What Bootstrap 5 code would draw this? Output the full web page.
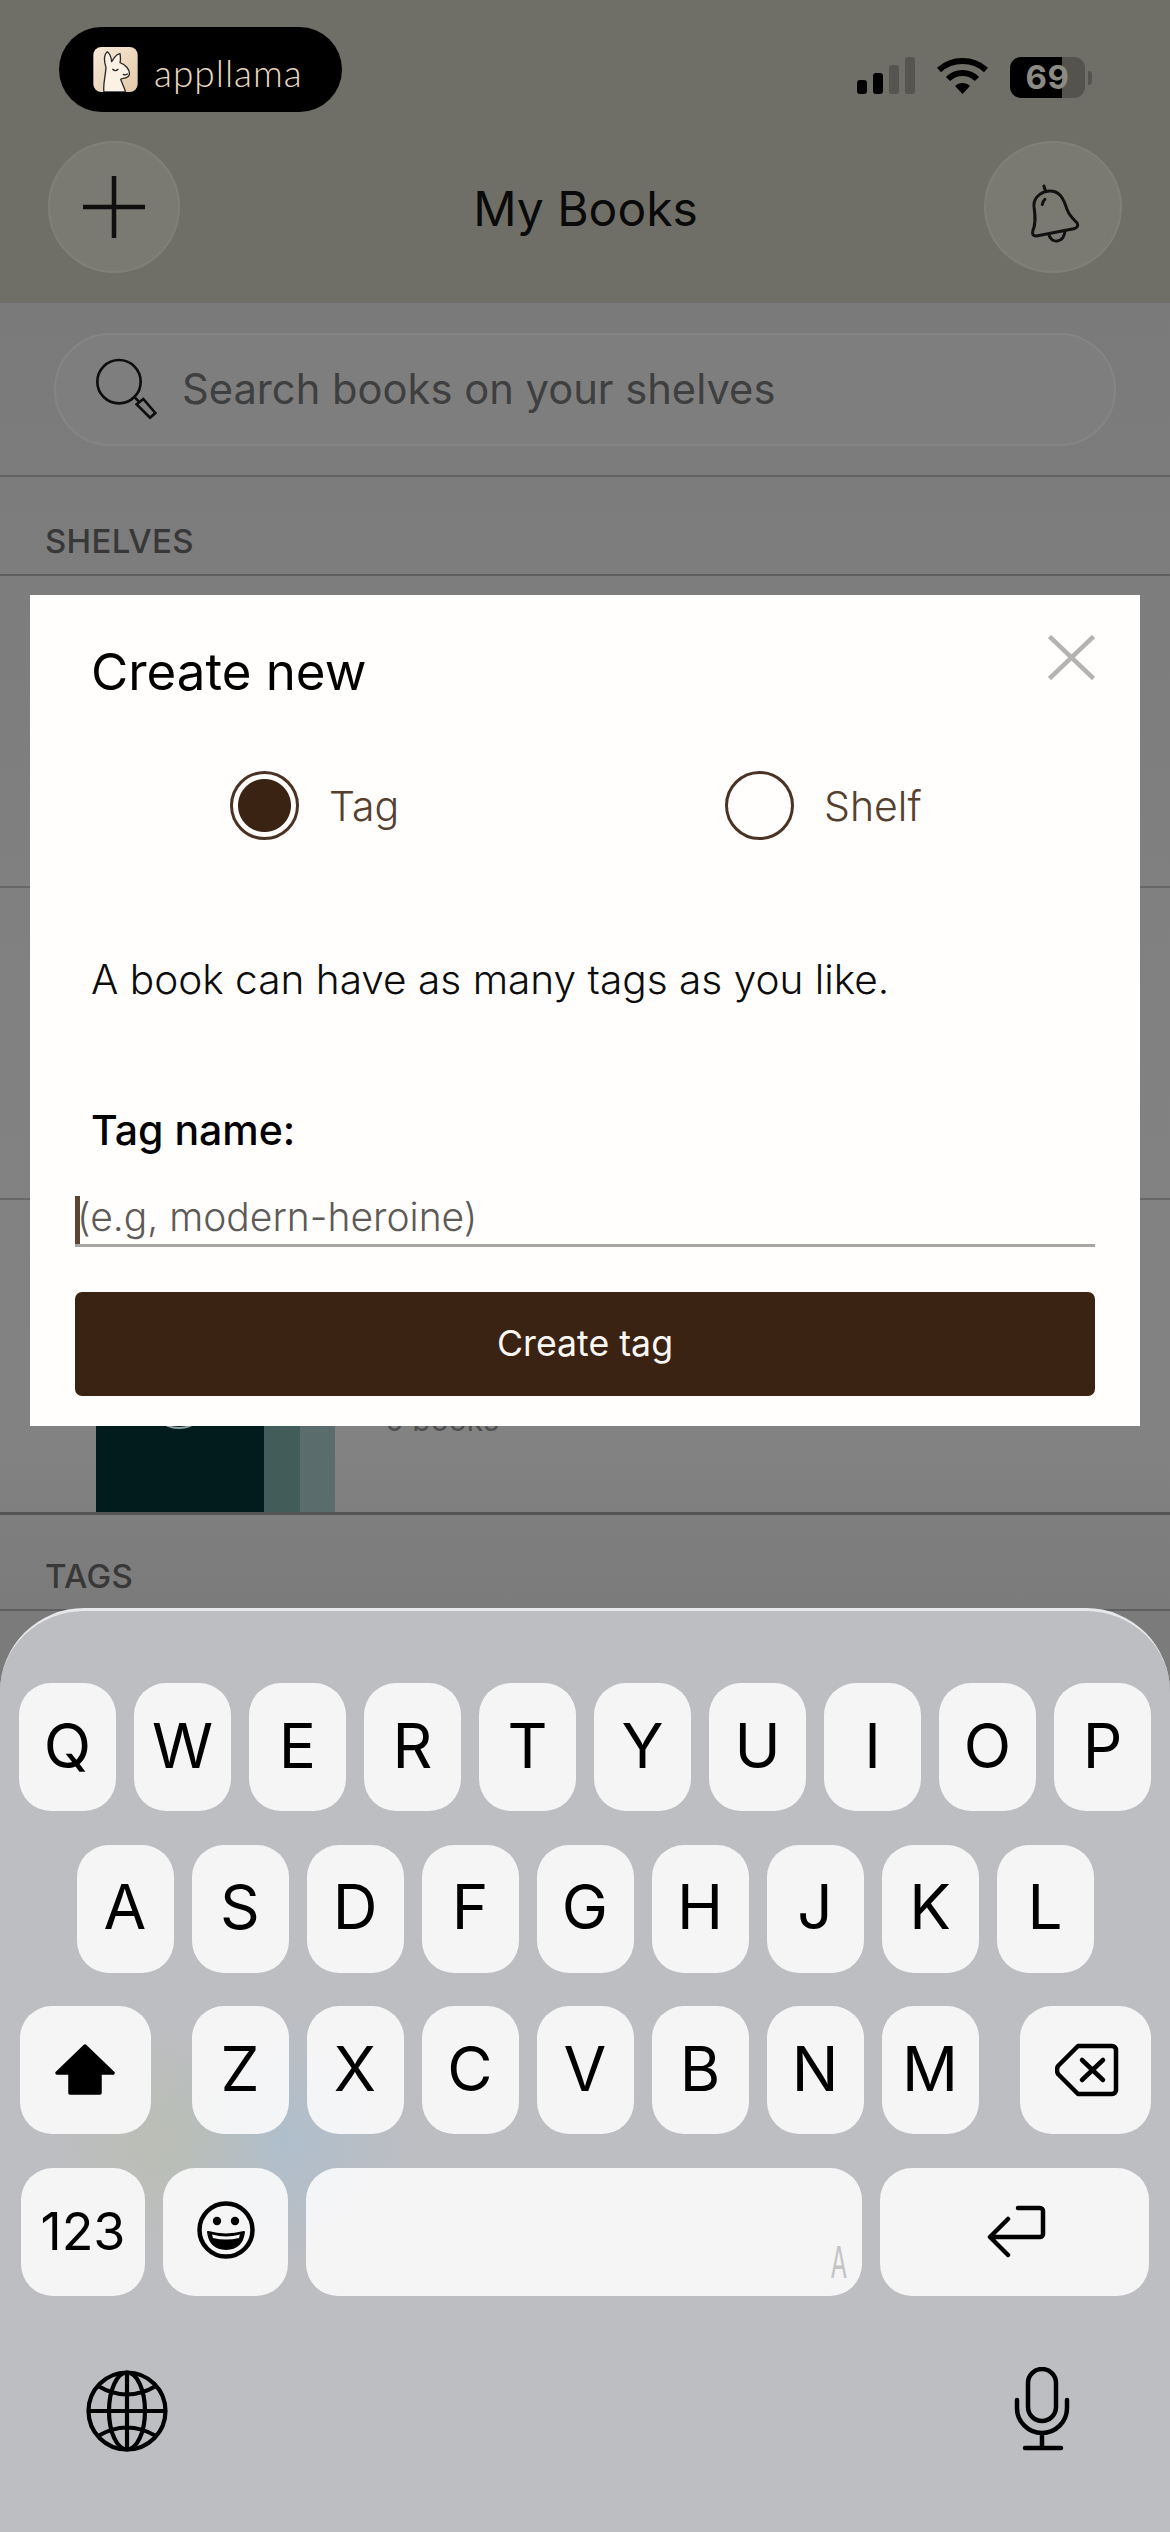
<!doctype html>
<html lang="en">
<head>
<meta charset="utf-8">
<title>My Books</title>
<link href="https://cdn.jsdelivr.net/npm/bootstrap@5.3.0/dist/css/bootstrap.min.css" rel="stylesheet">
<script src="https://cdn.jsdelivr.net/npm/bootstrap@5.3.0/dist/js/bootstrap.bundle.min.js"></script>
<style>
html,body{margin:0;width:1170px;height:2532px;overflow:hidden;background:#7c7c7c}
body{font-family:Inter,"Liberation Sans",sans-serif;color:#000}
.ap-phone{width:1170px;height:2532px;background:linear-gradient(180deg,#7a7a7a 300px,#818181 1000px,#828282 1450px,#7b7b7b 1600px)}
.ap-head{height:303px;background:#6f6f67;padding-top:27px}
.ap-pill{width:283px;height:85px;margin-left:59px;background:#000;border-radius:43px;padding-left:34px;gap:16px}
.ap-logo{width:45px;height:45px;display:block}
.ap-word{font-family:Lato,sans-serif;font-weight:300;font-size:37px;letter-spacing:1px;color:#ead8c3;line-height:1;padding-top:6px}
.ap-status{padding-top:30px;padding-right:78px;gap:22px}
.ap-batt{width:75px;height:41px;border-radius:11px;background:linear-gradient(90deg,#000 69%,#54534d 69%);color:#8b8b83;font-weight:700;font-size:33px;line-height:41px;text-align:center;letter-spacing:.5px}
.ap-nub{width:4px;height:14px;background:#54534d;border-radius:0 4px 4px 0;margin-left:3px}
.ap-nav{margin-top:29px;padding:0 48px}
.ap-round{height:132px;border-radius:50%;background:#7a7a73;border:2px solid #808079;padding:0}
.ap-plus{width:132px}
.ap-bell{width:138px}
.ap-bellicon{margin:14px 0 0 4px}
.ap-title{font-size:48px;line-height:60px;font-weight:400;color:#0a0a0a;margin:3px 0 0 7px}
.ap-searchwrap{height:174px;padding:30px 54px 0;border-bottom:2px solid #626262}
.ap-search{height:113px;border-radius:57px;background:#7e7e7e;border:2px solid #858585;padding-left:38px;gap:23px}
.ap-search span{font-size:41.7px;color:#3f3f3f}
.ap-section{height:99px;border-bottom:2px solid #5f5f5f;padding:0 0 16px 45px;display:flex;align-items:flex-end;font-size:33px;font-weight:500;color:#383838;line-height:1;letter-spacing:.3px}
.ap-section.ap-tags{height:96px}
.ap-shelf{height:312px;border-bottom:2px solid #676767}
.ap-shelf-last{height:315px;border-bottom:3px solid #555;padding-left:96px;align-items:flex-end;gap:50px;display:flex}
.ap-cover{width:239px;height:286px;padding:143px 0 0 53px;background:linear-gradient(90deg,#021b1c 168px,#425c5a 168px,#425c5a 204px,#5b6c6c 204px)}
.ap-ring{width:60px;height:60px;border-radius:50%;border:2px solid #93a3a3}
.ap-count{align-self:flex-start;font-size:30px;line-height:36px;color:#4e4e4e;margin-top:202px}
.ap-modal{position:absolute;left:30px;top:595px;width:1110px;height:831px;background:#fffefc;border:0;border-radius:0}
.ap-mtop{padding:40px 45px 0 61px}
.ap-mtitle{font-size:51px;line-height:60px;font-weight:400;margin:7px 0 0}
.ap-x{display:block}
.ap-radios{margin-top:69px;padding-left:200px}
.ap-ropt{width:495px;flex:none;gap:30px}
.ap-radio.form-check-input{width:69px;height:69px;margin:0;flex:none;border:3px solid #4a3325;background:#fffefc;box-shadow:none}
.ap-radio.form-check-input:checked{background:radial-gradient(circle,#3a2312 0 26px,#fffefc 27px)}
.ap-rlabel{font-size:41px;font-weight:300;color:#55402f;line-height:60px}
.ap-para{margin:115px 0 0 61px;font-size:40.6px;line-height:50px;font-weight:300;color:#0c0c0c}
.ap-lab{display:block;margin:100px 0 0 61px;font-size:41px;line-height:50px;font-weight:500;color:#000}
.ap-input.form-control{margin:41px 45px 0;width:1020px;height:51px;padding:0 0 5px 2px;border:0;border-bottom:3px solid #a9a7a4;border-radius:0;font-size:39px;background:linear-gradient(#5b4535,#5b4535) left top/5px 100% no-repeat;box-shadow:none}
.ap-input.form-control::placeholder{color:#5d5a57;opacity:1;font-weight:300}
.ap-cta.btn{display:block;margin:45px 45px 0;width:1020px;height:104px;background:#3a2312;border:0;border-radius:7px;color:#fbf7f2;font-size:35.7px;font-weight:400;padding:0}
.ap-kb{position:absolute;left:0;right:0;top:1608px;height:924px;border-top:3px solid #e6e8ea;border-radius:84px 84px 0 0;padding-top:72px;
 background:radial-gradient(circle 120px at 165px 530px,rgba(185,190,170,.55),transparent),radial-gradient(circle 130px at 280px 530px,rgba(165,190,210,.6),transparent),#bdbec2}
.ap-row{height:128px;justify-content:center;gap:18px;margin-bottom:33.6px}
.ap-key{width:97px;height:128px;background:rgba(255,255,255,.85);border-radius:32px;display:flex;align-items:center;justify-content:center;font-size:62px;line-height:1;color:#000;font-weight:400;padding-bottom:3px}
.ap-w131{width:131px}
.ap-gapl{margin-left:23px}
.ap-gapr{margin-right:23px}
.ap-w124{width:124px;font-size:52px;padding-bottom:0}
.ap-w125{width:125px}
.ap-w556{width:556px;justify-content:flex-end;align-items:flex-end;padding:0 16px 12px 0}
.ap-w269{width:269px}
.ap-tiny{font-size:44px;line-height:1;color:#c4c4c4;font-weight:400;transform:scaleX(.55);display:block;width:20px;text-align:center}
.ap-shifted{margin:3px 0 0 4px}
.ap-bottom{padding:38px 98px 0 83px}
svg{display:block}
</style>
</head>
<body>
<div class="ap-phone position-relative overflow-hidden">
  <header class="ap-head">
    <div class="d-flex justify-content-between align-items-start">
      <div class="ap-pill d-flex align-items-center">
        <svg class="ap-logo" viewBox="190 108 133 135" aria-hidden="true">
          <defs><linearGradient id="lg" x1="0" y1="0" x2="1" y2="1"><stop offset="0" stop-color="#f7ead9"/><stop offset="1" stop-color="#e3c9a8"/></linearGradient></defs>
          <rect x="190" y="108" width="133" height="135" rx="24" fill="url(#lg)"/>
          <path d="M222 243C218 225 225 205 228 170C222 150 222 130 232 122C242 130 244 142 245 152C250 145 258 128 270 128C272 140 272 148 270 155C285 160 300 175 298 190C295 205 275 200 272 205C278 220 282 230 287 243Z" fill="#fbf1e4" stroke="#2a2a2a" stroke-width="4" stroke-linejoin="round"/>
          <path d="M248 175q8 8 16 0M280 190q6 4 12 -1" fill="none" stroke="#2a2a2a" stroke-width="4" stroke-linecap="round"/>
        </svg>
        <span class="ap-word">appllama</span>
      </div>
      <div class="ap-status d-flex align-items-start">
        <svg width="58" height="37" viewBox="0 0 58 37" aria-hidden="true">
          <rect x="0" y="23" width="10" height="14" rx="3" fill="#000"/>
          <rect x="16" y="16" width="10" height="21" rx="3" fill="#000"/>
          <rect x="32" y="8" width="10" height="29" rx="3" fill="#56554f"/>
          <rect x="48" y="0" width="10" height="37" rx="3" fill="#56554f"/>
        </svg>
        <svg width="51" height="37" viewBox="0 0 51 37" aria-hidden="true">
          <path d="M2 13C15 1 36 1 49 13" fill="none" stroke="#000" stroke-width="6"/>
          <path d="M11 22C19 14 32 14 40 22" fill="none" stroke="#000" stroke-width="6"/>
          <path d="M25.5 37L18 29C22 25 29 25 33 29Z" fill="#000"/>
        </svg>
        <div class="d-flex align-items-center">
          <div class="ap-batt">69</div><div class="ap-nub"></div>
        </div>
      </div>
    </div>
    <div class="ap-nav d-flex justify-content-between align-items-center">
      <button type="button" class="btn ap-round ap-plus d-flex align-items-center justify-content-center" aria-label="Add">
        <svg width="62" height="62" viewBox="0 0 62 62"><path d="M0 31H62M31 0V62" stroke="#0f0f0f" stroke-width="4.5"/></svg>
      </button>
      <h1 class="ap-title">My Books</h1>
      <button type="button" class="btn ap-round ap-bell d-flex align-items-center justify-content-center" aria-label="Notifications">
        <svg class="ap-bellicon" width="53" height="63" viewBox="600 425 160 190">
          <path d="M622 585Q607 585 612 568C622 545 618 520 615 495C613 465 645 445 672 450C700 455 708 485 715 505C722 525 735 535 745 545Q752 558 735 563Z" fill="none" stroke="#111" stroke-width="9" stroke-linejoin="round"/>
          <path d="M660 580C665 608 705 610 709 568M645 434L650 450M640 490Q642 480 648 474" fill="none" stroke="#111" stroke-width="9" stroke-linecap="round"/>
        </svg>
      </button>
    </div>
  </header>

  <div class="ap-searchwrap">
    <div class="ap-search d-flex align-items-center">
      <svg width="65" height="65" viewBox="160 110 195 195" aria-hidden="true">
        <circle cx="235" cy="184" r="65" fill="none" stroke="#0d0d0d" stroke-width="8"/>
        <path d="M283 232L297 246" stroke="#0d0d0d" stroke-width="8"/>
        <path d="M288 252L308 236L344 278L328 292Z" fill="none" stroke="#0d0d0d" stroke-width="8"/>
      </svg>
      <span>Search books on your shelves</span>
    </div>
  </div>

  <div class="ap-section">SHELVES</div>
  <div class="ap-shelf"></div>
  <div class="ap-shelf"></div>
  <div class="ap-shelf-last">
    <div class="ap-cover"><div class="ap-ring"></div></div>
    <div class="ap-count">0 books</div>
  </div>
  <div class="ap-section ap-tags">TAGS</div>

  <div class="card ap-modal">
    <div class="ap-mtop d-flex justify-content-between align-items-start">
      <h2 class="ap-mtitle">Create new</h2>
      <svg class="ap-x" width="47" height="45" viewBox="0 0 47 45" aria-label="Close"><path d="M1.5 1.5L45.5 43.5M45.5 1.5L1.5 43.5" stroke="#b4b3b1" stroke-width="4.5"/></svg>
    </div>
    <div class="ap-radios d-flex">
      <label class="ap-ropt d-flex align-items-center">
        <input class="form-check-input ap-radio" type="radio" name="kind" checked>
        <span class="ap-rlabel">Tag</span>
      </label>
      <label class="ap-ropt d-flex align-items-center">
        <input class="form-check-input ap-radio" type="radio" name="kind">
        <span class="ap-rlabel">Shelf</span>
      </label>
    </div>
    <p class="ap-para">A book can have as many tags as you like.</p>
    <label class="ap-lab" for="tagname">Tag name:</label>
    <input id="tagname" class="form-control ap-input" type="text" placeholder="(e.g, modern-heroine)">
    <button type="button" class="btn ap-cta">Create tag</button>
  </div>

  <div class="ap-kb">
    <div class="ap-row d-flex">
      <div class="ap-key">Q</div><div class="ap-key">W</div><div class="ap-key">E</div><div class="ap-key">R</div><div class="ap-key">T</div><div class="ap-key">Y</div><div class="ap-key">U</div><div class="ap-key">I</div><div class="ap-key">O</div><div class="ap-key">P</div>
    </div>
    <div class="ap-row d-flex">
      <div class="ap-key">A</div><div class="ap-key">S</div><div class="ap-key">D</div><div class="ap-key">F</div><div class="ap-key">G</div><div class="ap-key">H</div><div class="ap-key">J</div><div class="ap-key">K</div><div class="ap-key">L</div>
    </div>
    <div class="ap-row d-flex">
      <div class="ap-key ap-w131 ap-gapr">
        <svg width="60" height="52" viewBox="0 0 60 52" aria-label="Shift"><path d="M30 3L58 30H45V50H15V30H2Z" fill="#000" stroke="#000" stroke-width="3.5" stroke-linejoin="round"/></svg>
      </div>
      <div class="ap-key">Z</div><div class="ap-key">X</div><div class="ap-key">C</div><div class="ap-key">V</div><div class="ap-key">B</div><div class="ap-key">N</div><div class="ap-key">M</div>
      <div class="ap-key ap-w131 ap-gapl">
        <svg class="ap-shifted" width="64" height="54" viewBox="0 0 64 54" aria-label="Delete"><path d="M23 3H57A4 4 0 0 1 61 7V47A4 4 0 0 1 57 51H23L3 31Q1 27 3 23Z" fill="none" stroke="#000" stroke-width="4.5" stroke-linejoin="round"/><path d="M27 17L48 37M48 17L27 37" stroke="#000" stroke-width="4.5" stroke-linecap="round"/></svg>
      </div>
    </div>
    <div class="ap-row d-flex">
      <div class="ap-key ap-w124">123</div>
      <div class="ap-key ap-w125">
        <svg width="60" height="60" viewBox="0 0 60 60" aria-label="Emoji"><circle cx="30" cy="30" r="26.5" fill="none" stroke="#000" stroke-width="4.5"/><circle cx="21" cy="21" r="4.2" fill="#000"/><circle cx="39" cy="21" r="4.2" fill="#000"/><path d="M12 32Q30 37 48 32Q46 49 30 49Q14 49 12 32Z" fill="#000" stroke="#000" stroke-width="2" stroke-linejoin="round"/><path d="M16 34.5Q30 38.5 44 34.5L43 38Q30 41 17 38Z" fill="#f5f6f8"/></svg>
      </div>
      <div class="ap-key ap-w556"><span class="ap-tiny">A</span></div>
      <div class="ap-key ap-w269">
        <svg class="ap-shifted" width="60" height="54" viewBox="0 0 60 54" aria-label="Return"><path d="M31 3H53A3 3 0 0 1 56 6V29A3 3 0 0 1 53 32H4M21 14L3 32L21 50" fill="none" stroke="#000" stroke-width="4.5" stroke-linecap="round" stroke-linejoin="round"/></svg>
      </div>
    </div>
    <div class="ap-bottom d-flex justify-content-between align-items-start">
      <svg width="88" height="88" viewBox="0 0 88 88" aria-label="Globe"><g fill="none" stroke="#000" stroke-width="4.2"><circle cx="44" cy="44" r="38.5"/><ellipse cx="44" cy="44" rx="18" ry="38.5"/><path d="M44 6V82M6 44H82M15 19Q44 36 73 19M15 69Q44 52 73 69"/></g></svg>
      <svg width="60" height="84" viewBox="0 0 60 84" aria-label="Dictation"><g fill="none" stroke="#000" stroke-width="4.5" stroke-linecap="round"><rect x="16" y="2" width="28" height="52" rx="14"/><path d="M5 33V41A25 25 0 0 0 55 41V33M30 66V81M13 81H49"/></g></svg>
    </div>
  </div>
</div>
</body>
</html>
